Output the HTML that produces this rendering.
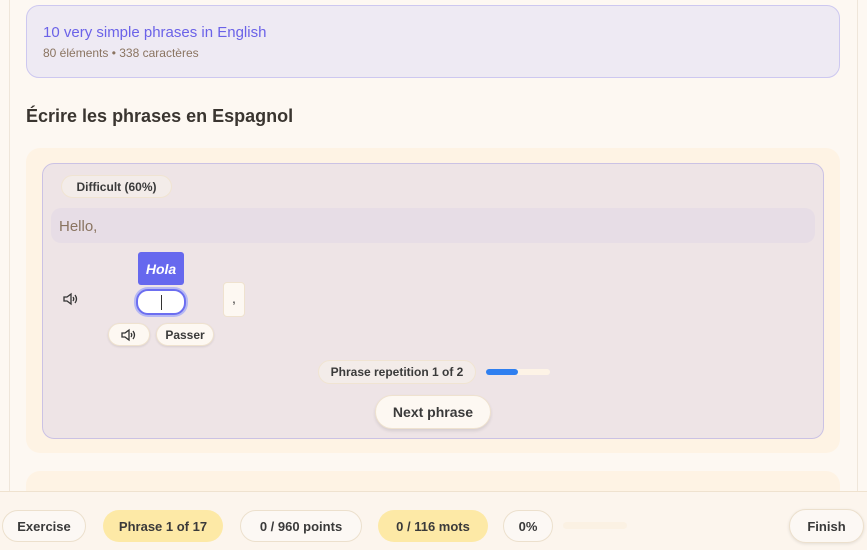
<!DOCTYPE html>
<html><head><meta charset="utf-8"><style>
*{box-sizing:border-box;margin:0;padding:0}
body{width:867px;height:550px;overflow:hidden;background:#fdf8f2;font-family:"Liberation Sans",sans-serif;position:relative;color:#3a3a3a}
.col{position:absolute;left:9px;top:0;width:849px;height:550px;border-left:1px solid #efe6da;border-right:1px solid #efe6da;background:#fdf8f2}
.abs{position:absolute}
.pill{position:absolute;border-radius:20px;font-weight:bold;display:flex;align-items:center;justify-content:center}
</style></head><body>
<div class="col"></div>
<div class="abs" style="left:26px;top:5px;width:814px;height:73px;background:#eeeaf3;border:1px solid #cdc8f0;border-radius:13px"></div>
<div class="abs" style="left:43px;top:24px;font-size:15px;color:#6b62e8">10 very simple phrases in English</div>
<div class="abs" style="left:43px;top:46px;font-size:12px;color:#8a7460">80 éléments • 338 caractères</div>
<div class="abs" style="left:26px;top:106px;font-size:18px;font-weight:bold;color:#3a3530">Écrire les phrases en Espagnol</div>
<div class="abs" style="left:26px;top:148px;width:814px;height:305px;background:#fef3e4;border-radius:14px"></div>
<div class="abs" style="left:42px;top:163px;width:782px;height:276px;background:#eee4e6;border:1px solid #cbc2e4;border-radius:12px"></div>
<div class="pill" style="left:61px;top:175px;width:111px;height:23px;background:#f3ece9;border:1px solid #f0e4d2;font-size:12px;color:#3a3a3a">Difficult (60%)</div>
<div class="abs" style="left:51px;top:208px;width:764px;height:35px;background:#e7dde6;border-radius:10px"></div>
<div class="abs" style="left:59px;top:218px;font-size:15px;color:#8a7460">Hello,</div>
<svg class="abs" style="left:63px;top:292px" width="16" height="14" viewBox="0 0 16 14" fill="none" stroke="#333" stroke-width="1.3"><path d="M1 5h3l4-3v10l-4-3H1z"/><path d="M10 5q1.5 2 0 4M12 3q3 4 0 8"/></svg>
<div class="abs" style="left:138px;top:252px;width:46px;height:33px;background:#6668ee;border-radius:3px;color:#fff;font-style:italic;font-weight:bold;font-size:14px;display:flex;align-items:center;justify-content:center">Hola</div>
<div class="abs" style="left:136px;top:289px;width:50px;height:26px;border:2px solid #6c6ef0;border-radius:12px;background:#fff;box-shadow:0 0 0 2px #b6b8f3"><div style="position:absolute;left:23px;top:4px;width:1px;height:15px;background:#333"></div></div>
<div class="abs" style="left:223px;top:282px;width:22px;height:35px;background:#fdf8f2;border:1px solid #efe2cf;border-radius:4px;font-size:14px;text-align:center;line-height:30px">,</div>
<div class="pill" style="left:108px;top:323px;width:42px;height:23px;background:#fdf8f2;border:1px solid #efe2cf;box-shadow:0 1px 2px rgba(0,0,0,.1)"><svg width="16" height="14" viewBox="0 0 16 14" fill="none" stroke="#333" stroke-width="1.3"><path d="M1 5h3l4-3v10l-4-3H1z"/><path d="M10 5q1.5 2 0 4M12 3q3 4 0 8"/></svg></div>
<div class="pill" style="left:156px;top:323px;width:58px;height:23px;background:#fdf8f2;border:1px solid #efe2cf;font-size:12px;box-shadow:0 1px 2px rgba(0,0,0,.1)">Passer</div>
<div class="pill" style="left:318px;top:360px;width:158px;height:24px;background:#f3ece9;border:1px solid #f0e4d2;font-size:12px">Phrase repetition 1 of 2</div>
<div class="abs" style="left:486px;top:369px;width:64px;height:6px;background:#fdf3e6;border-radius:3px"><div style="width:32px;height:6px;background:#2f7ff0;border-radius:3px"></div></div>
<div class="pill" style="left:375px;top:395px;width:116px;height:34px;background:#fdf8f2;border:1px solid #efe2cf;font-size:14px;box-shadow:0 2px 3px rgba(0,0,0,.1)">Next phrase</div>
<div class="abs" style="left:26px;top:471px;width:814px;height:40px;background:#fef3e4;border-radius:14px"></div>
<div class="abs" style="left:0;top:491px;width:867px;height:59px;background:#fcf5ed;border-top:1px solid #efe2cf"></div>
<div class="pill" style="left:2px;top:510px;width:84px;height:32px;background:#fcf8f4;border:1px solid #ece0cd;font-size:13px">Exercise</div>
<div class="pill" style="left:103px;top:510px;width:120px;height:32px;background:#fde9a6;font-size:13px">Phrase 1 of 17</div>
<div class="pill" style="left:240px;top:510px;width:122px;height:32px;background:#fcf8f4;border:1px solid #ece0cd;font-size:13px">0 / 960 points</div>
<div class="pill" style="left:378px;top:510px;width:110px;height:32px;background:#fde9a6;font-size:13px">0 / 116 mots</div>
<div class="pill" style="left:503px;top:510px;width:50px;height:32px;background:#fcf8f4;border:1px solid #ece0cd;font-size:13px">0%</div>
<div class="abs" style="left:563px;top:522px;width:64px;height:7px;background:#fbf1e3;border-radius:4px"></div>
<div class="pill" style="left:789px;top:509px;width:75px;height:34px;background:#fcf8f4;border:1px solid #ece0cd;font-size:13px;box-shadow:0 1px 3px rgba(0,0,0,.1)">Finish</div>
</body></html>
